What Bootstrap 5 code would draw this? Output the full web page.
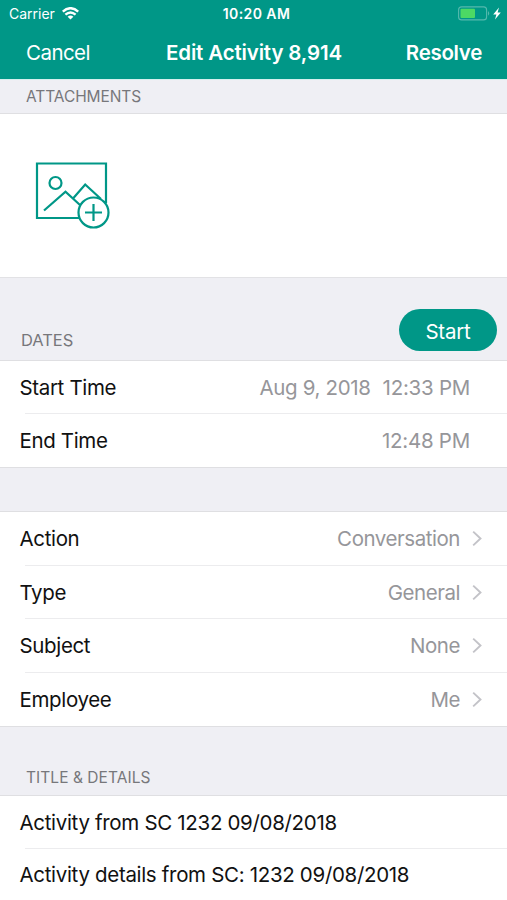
<!DOCTYPE html>
<html lang="en">
<head>
<meta charset="utf-8">
<meta name="viewport" content="width=device-width, initial-scale=1">
<title>Edit Activity</title>
<link href="https://cdn.jsdelivr.net/npm/bootstrap@5.3.0/dist/css/bootstrap.min.css" rel="stylesheet">
<style>
body{font-family:Inter,"Liberation Sans",sans-serif;font-size:20.5px;letter-spacing:-.35px;line-height:24px;background:#fff;color:#111;height:900px;overflow:hidden}
.top-area{background:#009787;color:#fff;height:79px;border-bottom:1px solid #009787}
.status-line{height:27px;font-size:14px;letter-spacing:0;line-height:27px;padding:0 5px 0 9px}
.clock{letter-spacing:.4px;padding-left:2px}
.wifi{margin-left:7px}
.side{flex:1 1 0}
.title-line{height:51px;padding:1px 25px 0 26px}
.title-line span{white-space:nowrap}
.title-line .fw-semibold{letter-spacing:-.15px}
.title-line .resolve.fw-semibold{letter-spacing:-.3px}
.title-line .cancel{letter-spacing:-.55px}
.band{background:#efeff4;border-bottom:1px solid #dfdfe2;color:#77777b;line-height:20px}
.band-attach{height:35px;font-size:15.5px;letter-spacing:-.08px;padding:0 26px;border-top:1px solid #d5f0ee}
.band-dates{height:83px;font-size:16.5px;letter-spacing:-.05px;padding:0 10px 9px 21px}
.dates{padding-bottom:1px}
.band-gap{height:44px}
.band-title{height:69px;font-size:15.5px;letter-spacing:.05px;padding:0 26px 7px}
.attach{height:164px;border-bottom:1px solid #e2e2e5;padding:47px 0 0 34px}
.rows{border-bottom:1px solid #dfdfe2}
.field{height:53px;padding:0 37px 0 19.5px;background:linear-gradient(#ececee,#ececee) 25px 100%/100% 1px no-repeat}
.field:last-child{background:none}
.picks .field{height:53.5px;padding:1px 24px 0 19.5px}
.value{color:#96969a}
.picks .value{margin-right:12px;letter-spacing:-.45px}
.stamp{letter-spacing:-.25px}
.day{letter-spacing:-.35px}
.start{background:#009787;color:#fff;font-size:20.5px;letter-spacing:-.2px;width:98px;height:42px;line-height:24px;border:0}
.entries{border:0}
.entries .field{letter-spacing:-.32px}
.entries .field:last-child{height:51px}
</style>
<script src="https://cdn.jsdelivr.net/npm/bootstrap@5.3.0/dist/js/bootstrap.bundle.min.js"></script>
</head>
<body>
<header class="top-area">
  <div class="status-line d-flex align-items-center">
    <div class="side d-flex align-items-center"><span class="carrier">Carrier</span>
      <svg class="wifi" width="17" height="13" viewBox="0 0 17 13" fill="none" stroke="#fff" stroke-width="2.4"><path d="M.8 4.6Q8.5-2.2 16.200 4.600M3.400 7.600Q8.500 3.200 13.600 7.600"/><path d="M8.500 12.600 5.600 9.800Q8.500 7.400 11.400 9.800Z" fill="#fff" stroke="none"/></svg>
    </div>
    <span class="clock fw-semibold">10:20 AM</span>
    <div class="side d-flex align-items-center justify-content-end">
      <svg width="44" height="15" viewBox="0 0 44 15"><rect x=".6" y=".9" width="28" height="13" rx="3" fill="none" stroke="#55b9ae" stroke-width="1.1"/><rect x="2.500" y="2.700" width="14.500" height="9.400" rx="1" fill="#4cd964"/><path d="M30 5q2.500 2.400 0 4.800z" fill="#55b9ae"/><path d="M41 1.500 35.200 8.600H38.400L37 13.500 42.800 6.400H39.600Z" fill="#fff"/></svg>
    </div>
  </div>
  <div class="title-line d-flex align-items-center">
    <div class="side"><span class="cancel">Cancel</span></div>
    <span class="heading fw-semibold">Edit Activity 8,914</span>
    <div class="side text-end"><span class="resolve fw-semibold">Resolve</span></div>
  </div>
</header>
<main>
  <div class="band band-attach d-flex align-items-center"><span>ATTACHMENTS</span></div>
  <div class="attach">
    <svg class="d-block" width="78" height="70" viewBox="34 161 78 70" fill="none" stroke="#009787" stroke-width="2.2"><path d="M79 218H37V163.500H106V203"/><circle cx="55.500" cy="183" r="6"/><path d="M44 210.500 65.500 191.700 80 205M73 198.500 85.200 184.500 101 199"/><circle cx="93.500" cy="212.500" r="15" fill="#fff"/><path d="M85 212.500H102M93.500 204V221"/></svg>
  </div>
  <div class="band band-dates d-flex align-items-end justify-content-between"><span class="dates">DATES</span><button class="start btn rounded-pill p-0 pt-1">Start</button></div>
  <div class="rows">
    <div class="field d-flex align-items-center"><span class="me-auto">Start Time</span><span class="value day me-2">Aug 9, 2018</span><span class="value stamp ms-1">12:33 PM</span></div>
    <div class="field d-flex align-items-center"><span class="me-auto">End Time</span><span class="value stamp">12:48 PM</span></div>
  </div>
  <div class="band band-gap"></div>
  <div class="rows picks">
    <div class="field d-flex align-items-center"><span class="me-auto">Action</span><span class="value">Conversation</span><svg width="11" height="18" viewBox="0 0 11 18" fill="none" stroke="#c3c3c8" stroke-width="1.9"><path d="M1.200 1.600 8.500 8.500 1.200 15.400"/></svg></div>
    <div class="field d-flex align-items-center"><span class="me-auto">Type</span><span class="value">General</span><svg width="11" height="18" viewBox="0 0 11 18" fill="none" stroke="#c3c3c8" stroke-width="1.9"><path d="M1.200 1.600 8.500 8.500 1.200 15.400"/></svg></div>
    <div class="field d-flex align-items-center"><span class="me-auto">Subject</span><span class="value">None</span><svg width="11" height="18" viewBox="0 0 11 18" fill="none" stroke="#c3c3c8" stroke-width="1.9"><path d="M1.200 1.600 8.500 8.500 1.200 15.400"/></svg></div>
    <div class="field d-flex align-items-center"><span class="me-auto">Employee</span><span class="value">Me</span><svg width="11" height="18" viewBox="0 0 11 18" fill="none" stroke="#c3c3c8" stroke-width="1.9"><path d="M1.200 1.600 8.500 8.500 1.200 15.400"/></svg></div>
  </div>
  <div class="band band-title d-flex align-items-end"><span>TITLE &amp; DETAILS</span></div>
  <div class="rows entries">
    <div class="field d-flex align-items-center"><span>Activity from SC 1232 09/08/2018</span></div>
    <div class="field d-flex align-items-center"><span>Activity details from SC: 1232 09/08/2018</span></div>
  </div>
</main>
</body>
</html>
